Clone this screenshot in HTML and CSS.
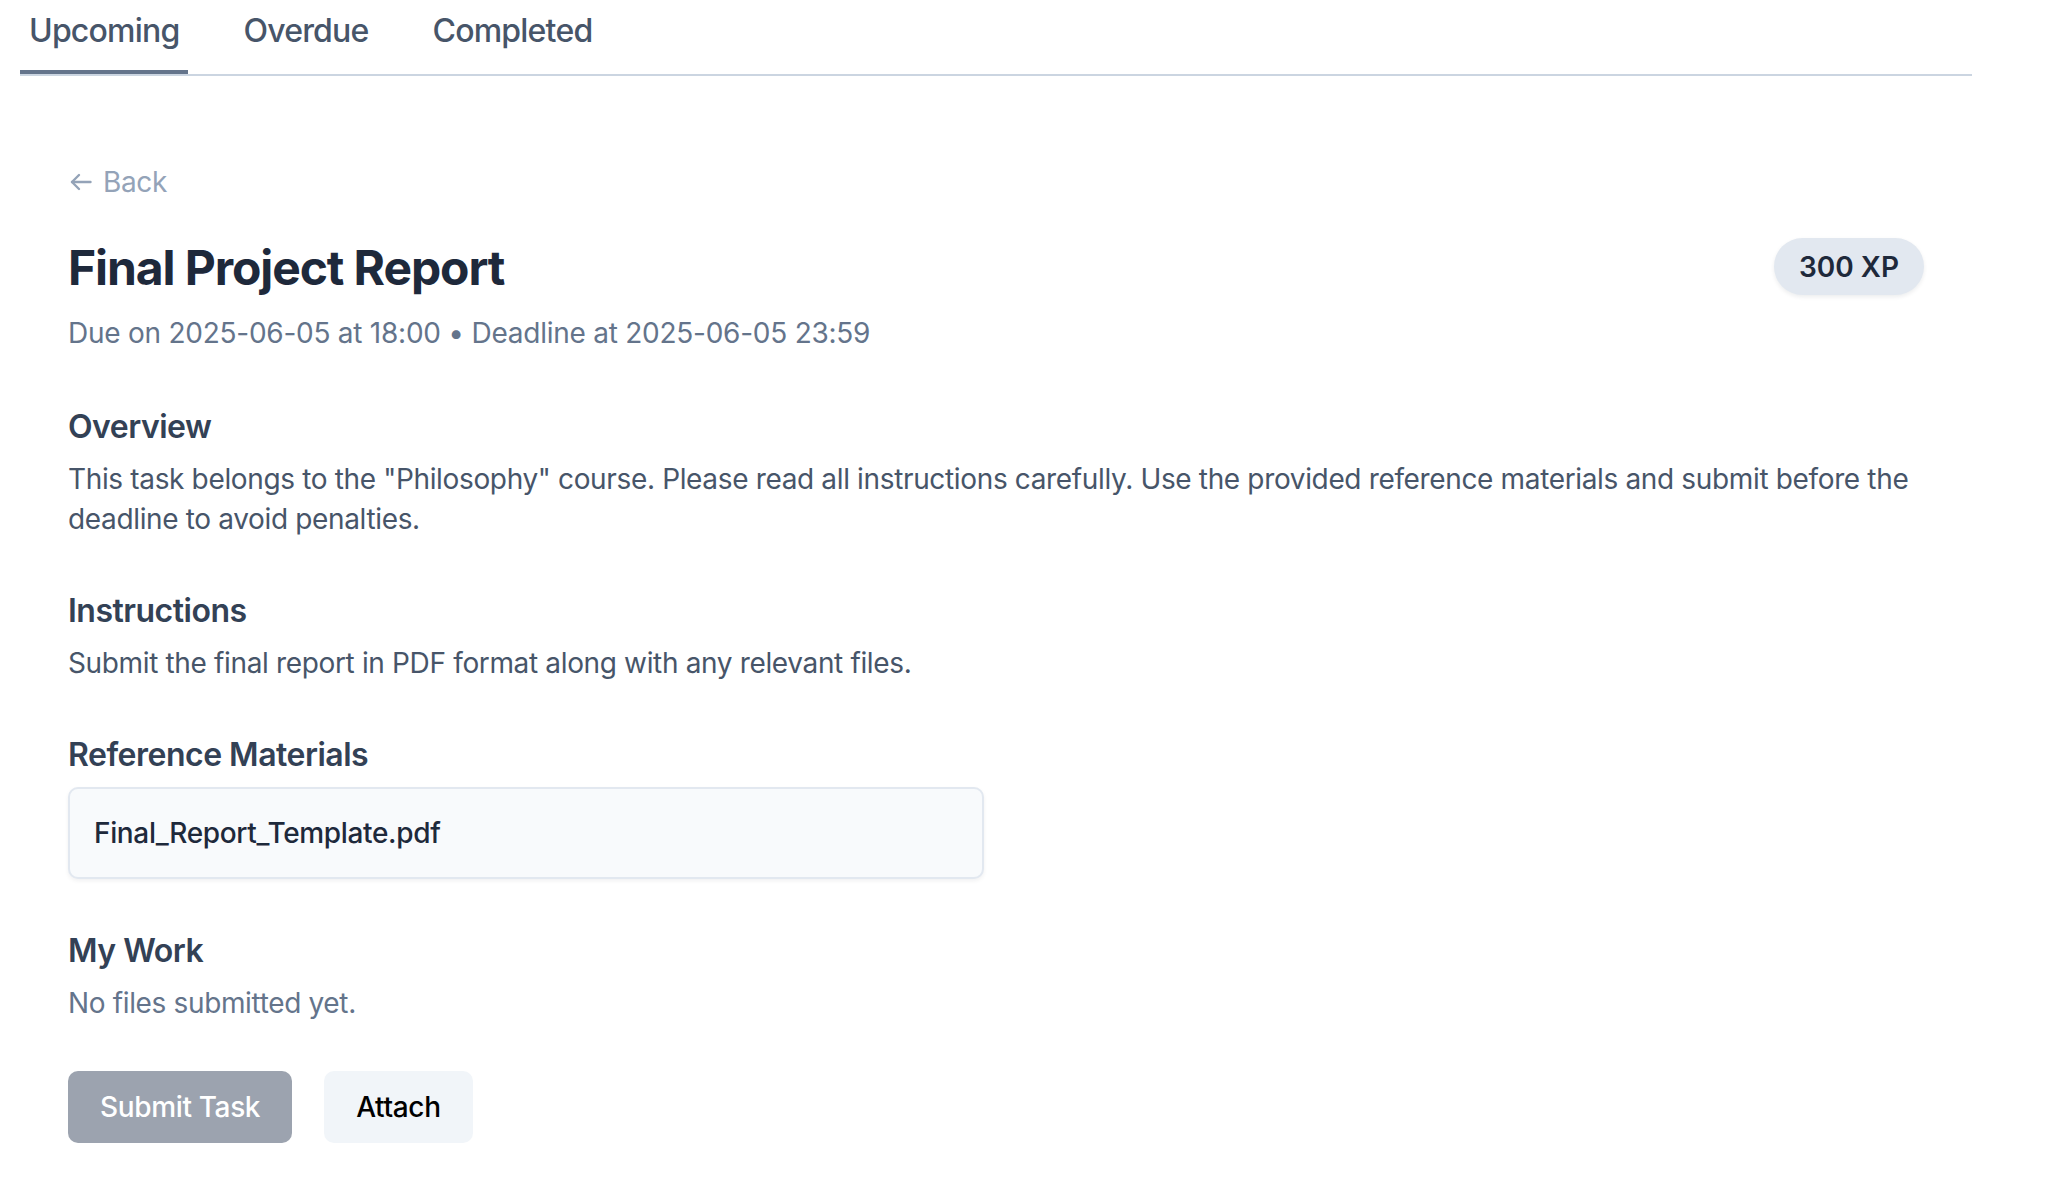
FILE: index.html
```html
<!DOCTYPE html>
<html lang="en">
<head>
<meta charset="utf-8">
<title>Final Project Report</title>
<link rel="stylesheet" href="styles.css">
</head>
<body>
<div class="app">
  <nav class="tabs">
    <a class="tab active">Upcoming</a>
    <a class="tab">Overdue</a>
    <a class="tab">Completed</a>
  </nav>
  <main class="detail">
    <a class="back">
      <svg class="back-icon" width="22" height="18" viewBox="0 0 22 18" fill="none" stroke="currentColor" stroke-width="2.4" stroke-linecap="round" stroke-linejoin="round"><path d="M20.5 9H2"/><path d="M9 2L2 9l7 7"/></svg>
      <span>Back</span>
    </a>
    <header class="title-row">
      <h1 class="title">Final Project Report</h1>
      <span class="xp">300 XP</span>
    </header>
    <p class="due">Due on 2025-06-05 at 18:00 • Deadline at 2025-06-05 23:59</p>

    <section class="section">
      <h2 class="section-title">Overview</h2>
      <p class="section-text">This task belongs to the "Philosophy" course. Please read all instructions carefully. Use the provided reference materials and submit before the deadline to avoid penalties.</p>
    </section>

    <section class="section">
      <h2 class="section-title">Instructions</h2>
      <p class="section-text">Submit the final report in PDF format along with any relevant files.</p>
    </section>

    <section class="section">
      <h2 class="section-title">Reference Materials</h2>
      <div class="file">Final_Report_Template.pdf</div>
    </section>

    <section class="section">
      <h2 class="section-title">My Work</h2>
      <p class="section-text muted">No files submitted yet.</p>
    </section>

    <div class="actions">
      <button class="btn btn-submit" disabled>Submit Task</button>
      <button class="btn btn-attach">Attach</button>
    </div>
  </main>
</div>
</body>
</html>
```

FILE: styles.css
```css
* { box-sizing: border-box; }

html, body {
  margin: 0;
  padding: 0;
  background: #ffffff;
}

body {
  font-family: "Inter", "Noto Sans", sans-serif;
  color: #334155;
  letter-spacing: -0.35px;
}

.app {
  padding: 0 88px 0 20px;
}

.tabs {
  display: flex;
  gap: 46px;
  border-bottom: 2px solid #cbd5e1;
}

.tab {
  display: block;
  padding: 7px 9px 15px;
  font-size: 32px;
  line-height: 48px;
  font-weight: 500;
  letter-spacing: -0.8px;
  color: #475569;
  border-bottom: 4px solid transparent;
  cursor: pointer;
}

.tab.active {
  border-bottom-color: #64748b;
}

.detail {
  padding: 86px 48px 40px;
}

.back {
  display: inline-flex;
  align-items: center;
  gap: 11px;
  height: 40px;
  font-size: 28px;
  line-height: 40px;
  color: #94a3b8;
  cursor: pointer;
}

.back-icon {
  display: block;
  margin-left: 2px;
}

.title-row {
  display: flex;
  align-items: center;
  justify-content: space-between;
  margin-top: 34px;
}

.title {
  margin: 0;
  font-size: 48px;
  line-height: 64px;
  font-weight: 700;
  color: #1e293b;
  letter-spacing: -1.1px;
}

.xp {
  display: inline-flex;
  align-items: center;
  height: 57px;
  padding: 0 25px;
  border-radius: 999px;
  background: #e2e8f0;
  color: #1e293b;
  font-size: 28px;
  font-weight: 600;
  letter-spacing: 0;
  box-shadow: 0 2px 4px rgba(15, 23, 42, 0.08);
  margin-top: -3px;
}

.due {
  margin: 13px 0 0;
  font-size: 28px;
  line-height: 40px;
  color: #64748b;
  letter-spacing: -0.25px;
}

.section {
  margin-top: 48px;
}

.section:first-of-type {
  margin-top: 50px;
}

.section-title {
  margin: 0 0 8px;
  font-size: 32px;
  line-height: 48px;
  font-weight: 600;
  color: #334155;
  letter-spacing: -0.5px;
}

.section-text {
  margin: 0;
  font-size: 28px;
  line-height: 40px;
  color: #475569;
}

.section-text.muted {
  color: #64748b;
}

.file {
  width: 916px;
  padding: 24px 24px;
  border: 2px solid #e2e8f0;
  border-radius: 10px;
  background: #f8fafc;
  box-shadow: 0 2px 4px rgba(15, 23, 42, 0.06);
  font-size: 28px;
  line-height: 40px;
  font-weight: 500;
  color: #1e293b;
}

.actions {
  display: flex;
  gap: 32px;
  margin-top: 48px;
}

.btn {
  height: 72px;
  padding: 0 32px;
  border: none;
  border-radius: 10px;
  font-family: inherit;
  font-size: 28px;
  line-height: 40px;
  font-weight: 500;
  letter-spacing: -0.35px;
  cursor: pointer;
}

.btn-submit {
  background: #9ca3af;
  color: #ffffff;
  cursor: not-allowed;
}

.btn-attach {
  background: #f1f5f9;
  color: #000000;
}
```
